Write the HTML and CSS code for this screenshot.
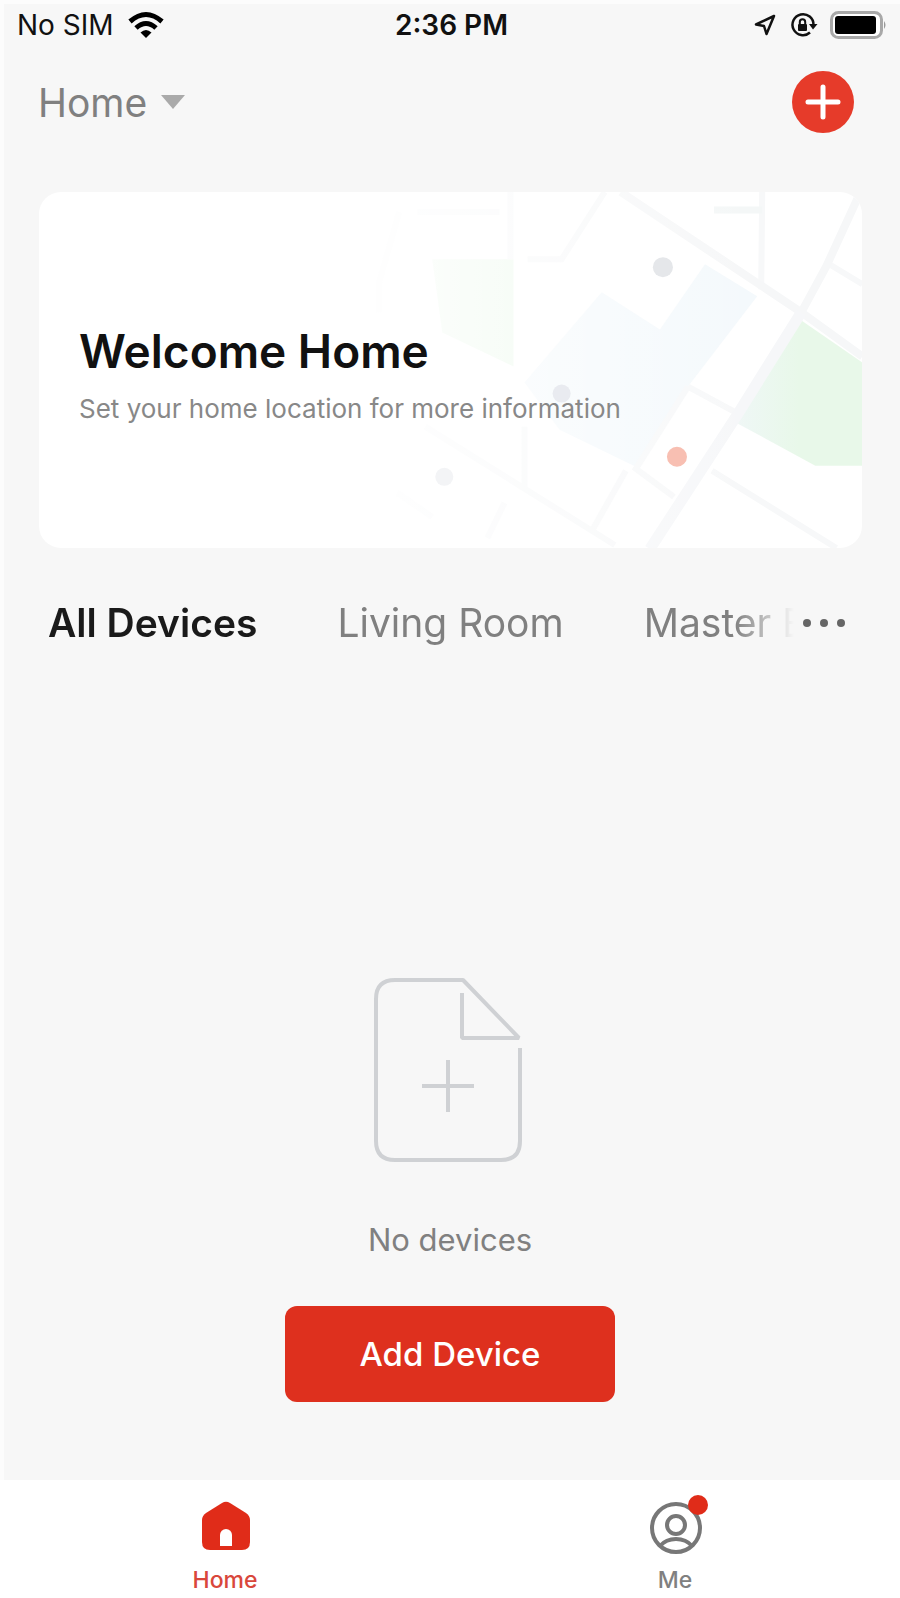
FILE: index.html
```html
<!DOCTYPE html>
<html lang="en">
<head>
    <meta charset="UTF-8">
    <meta name="viewport" content="width=device-width, initial-scale=1.0">
    <title>Home</title>

    <link rel="stylesheet" href="styles.css">
</head>
<body>
    <div class="app">
        <div class="status_bar">
            <div class="status_left">
                <span>No SIM</span>
                <svg width="36" height="26" viewBox="0 0 36 26" fill="none" stroke="#000" stroke-width="5">
                    <path d="M2 9.500Q18-4.500 34 9.500"/>
                    <path d="M8 16Q18 7 28 16"/>
                    <path d="M18 26L12.500 20.500Q18 15.500 23.500 20.500Z" fill="#000" stroke="none"/>
                </svg>
            </div>
            <span class="status_time">2:36 PM</span>
            <div class="status_right">
                <svg width="22" height="22" viewBox="0 0 22 22" fill="none" stroke="#111" stroke-width="2.500" stroke-linejoin="round">
                    <path d="M20 2L2 10.500L10 12L12.500 20Z"/>
                </svg>
                <svg width="26" height="26" viewBox="0 0 26 26" fill="none" stroke="#111" stroke-width="2.500">
                    <path d="M20 20.500A10.500 10.500 0 1 1 23.500 13"/>
                    <path d="M19 12H27.500L23 17.500Z" fill="#111" stroke="none"/>
                    <rect x="8" y="12" width="9" height="7" rx="1" fill="#111" stroke="none"/>
                    <path d="M9.800 12V10A2.700 2.700 0 0 1 15.200 10V12" stroke-width="2"/>
                </svg>
                <svg width="56" height="28" viewBox="0 0 56 28">
                    <rect x="1.500" y="1.500" width="50" height="25" rx="7" fill="#fff" stroke="#a8a8a8" stroke-width="3"/>
                    <rect x="5" y="5" width="41" height="18" rx="3"/>
                    <path d="M54 10Q57 14 54 18Z" fill="#999"/>
                </svg>
            </div>
        </div>

        <header class="header">
            <button class="home_menu" type="button">
                Home
                <svg width="24" height="14" viewBox="0 0 24 14"><path d="M0 0H24L12 14Z" fill="#aaa"/></svg>
            </button>
            <button class="add_btn" type="button" aria-label="Add">
                <svg width="34" height="34" viewBox="0 0 34 34" stroke="#fff" stroke-width="5" stroke-linecap="round"><path d="M17 2V32M2 17H32"/></svg>
            </button>
        </header>

        <section class="card">
            <svg class="map" viewBox="0 0 522 355" preserveAspectRatio="xMaxYMid slice" fill="none">
                <defs>
                    <linearGradient id="fade">
                        <stop offset="0" stop-color="#fff" stop-opacity="1"/>
                        <stop offset="0.800" stop-color="#fff" stop-opacity="0"/>
                    </linearGradient>
                    <linearGradient id="park">
                        <stop offset="0" stop-color="#eff7f6"/>
                        <stop offset="0.500" stop-color="#e8f8e9"/>
                    </linearGradient>
                </defs>
                <!-- water and parks -->
                <path d="M365 72L417 104L348 194L296 274L220 237L185 190L262 100L320 137Z" fill="#f4f9fc"/>
                <path d="M93 67H174V174L103 140Z" fill="#ecf9ec"/>
                <path d="M455 124L522 170V273H475L396 230Z" fill="url(#park)"/>
                <!-- roads -->
                <g stroke="#f7f8f9" stroke-width="6">
                    <path d="M171 0V67"/>
                    <path d="M265 0L222 67H188"/>
                    <path d="M422 0L421 97"/>
                    <path d="M78 20H160M60 20L40 90V120"/>
                    <path d="M489 72L522 92"/>
                    <path d="M348 194L396 220"/>
                    <path d="M348 194L296 276L334 304"/>
                    <path d="M286 278L251 340"/>
                    <path d="M372 278L496 355"/>
                    <path d="M86 234L275 352"/>
                    <path d="M185 234V297"/>
                    <path d="M58 300L93 324M165 310L148 345"/>
                </g>
                <path d="M281 0L461 120L522 164" stroke="#f6f7f8" stroke-width="8"/>
                <path d="M520 0L486 74L461 120" stroke="#f6f7f8" stroke-width="8"/>
                <path d="M461 120L396 224L310 356" stroke="#f6f7f9" stroke-width="11"/>
                <path d="M374 18H422" stroke="#f4f7f7" stroke-width="7"/>
                <rect width="522" height="355" fill="url(#fade)"/>
                <!-- places -->
                <circle cx="323" cy="75" r="10" fill="#e5e7ea"/>
                <circle cx="222" cy="201" r="9" fill="#e9ebf0"/>
                <circle cx="105" cy="284" r="9" fill="#f3f4f6"/>
                <circle cx="337" cy="264" r="10" fill="#f8bfb2"/>
            </svg>
            <h1 class="card_title">Welcome Home</h1>
            <p class="card_text">Set your home location for more information</p>
        </section>

        <div class="rooms">
            <div class="room_list">
                <button class="room active" type="button">All Devices</button>
                <button class="room" type="button">Living Room</button>
                <button class="room" type="button">Master Bedroom</button>
            </div>
            <button class="more_btn" type="button" aria-label="More">
                <svg width="44" height="10" viewBox="0 0 44 10" fill="#666">
                    <circle cx="5" cy="5" r="4"/><circle cx="22" cy="5" r="4"/><circle cx="39" cy="5" r="4"/>
                </svg>
            </button>
        </div>

        <main class="empty">
            <svg width="150" height="184" viewBox="0 0 150 184" fill="none" stroke="#cfd1d4" stroke-width="4">
                <path d="M145 70V163Q145 182 126 182H20Q1 182 1 163V21Q1 2 20 2H88L144 60H87V15" stroke-linejoin="bevel"/>
                <path d="M73 82V134M47 108H99"/>
            </svg>
            <p class="empty_text">No devices</p>
            <button class="button" type="button">Add Device</button>
        </main>

        <nav class="tab_bar">
            <a class="tab active" href="#home">
                <svg width="54" height="60" viewBox="0 0 54 60">
                    <path d="M24 8Q28 5.500 32 8L48 18Q52 21 52 25V47Q52 55 44 55H12Q4 55 4 47V25Q4 21 8 18Z" fill="#e02c19"/>
                    <path d="M22 51V40A6 6 0 0 1 34 40V51Z" fill="#fff"/>
                </svg>
                Home
            </a>
            <a class="tab" href="#me">
                <svg width="60" height="60" viewBox="0 0 60 60" fill="none" stroke="#777" stroke-width="4">
                    <circle cx="31" cy="33" r="24"/>
                    <circle cx="31" cy="30" r="9"/>
                    <path d="M15 51Q21 44 31 44T47 51"/>
                    <circle cx="53" cy="10" r="10" fill="#e02c19" stroke="none"/>
                </svg>
                Me
            </a>
        </nav>
    </div>
</body>
</html>
```

FILE: styles.css
```css
* {
    box-sizing: border-box;
}
body {
    margin: 0;
    font-family: Inter, "Liberation Sans", sans-serif;
    background-color: #fcfcfc;
}
button {
    border: none;
    padding: 0;
    background: none;
    font-family: inherit;
    cursor: pointer;
}
svg {
    display: block;
    flex: none;
    overflow: visible;
}
.app {
    display: flex;
    flex-direction: column;
    min-height: 100vh;
    background-color: #f7f7f7;
    box-shadow: inset 4px 4px #fcfcfc;
}
.status_bar {
    display: grid;
    grid-template-columns: 1fr auto 1fr;
    align-items: center;
    height: 50px;
    padding: 0 14px 0 17px;
    font-size: 28px;
    color: #111;
}
.status_left,
.status_right {
    display: flex;
    align-items: center;
    gap: 14px;
}
.status_right {
    justify-content: flex-end;
}
.status_time {
    font-weight: 600;
}
.header {
    display: flex;
    align-items: center;
    justify-content: space-between;
    height: 104px;
    padding: 0 46px 0 38px;
}
.home_menu {
    display: flex;
    align-items: center;
    gap: 14px;
    font-size: 39px;
    color: #808080;
}
.add_btn {
    display: flex;
    align-items: center;
    justify-content: center;
    width: 62px;
    height: 62px;
    border-radius: 50%;
    background-color: #e63b2a;
}
.card {
    position: relative;
    margin: 38px 38px 0 39px;
    padding: 131px 40px 121px;
    border-radius: 22px;
    background-color: #fff;
    overflow: hidden;
}
/* map sits behind the welcome text */
.map {
    position: absolute;
    top: 0;
    right: 0;
    height: 100%;
}
.card_title {
    position: relative;
    margin: 0;
    font-size: 46px;
    line-height: 56px;
    font-weight: 600;
    color: #111;
}
.card_text {
    position: relative;
    margin: 12px 0 0;
    font-size: 26px;
    line-height: 36px;
    color: #888;
}
.rooms {
    display: flex;
    align-items: center;
    gap: 8px;
    margin-top: 51px;
    padding: 0 54px 0 48px;
}
.room_list {
    display: flex;
    flex: 1;
    gap: 80px;
    overflow: hidden;
    -webkit-mask-image: linear-gradient(to left, transparent, #000 60px);
    mask-image: linear-gradient(to left, transparent, #000 60px);
}
.room {
    flex: none;
    font-size: 39px;
    line-height: 48px;
    color: #808080;
}
.room.active {
    font-weight: 600;
    color: #1a1a1a;
}
.empty {
    display: flex;
    flex: 1;
    flex-direction: column;
    align-items: center;
    justify-content: flex-end;
    padding-bottom: 78px;
}
.empty_text {
    margin: 58px 0 46px;
    font-size: 31px;
    line-height: 40px;
    color: #808080;
}
.button {
    width: 330px;
    height: 96px;
    border-radius: 12px;
    background-color: #de301e;
    font-size: 33px;
    font-weight: 500;
    color: #fff;
}
.tab_bar {
    display: flex;
    height: 118px;
    background-color: #fff;
}
.tab {
    display: flex;
    flex: 1;
    flex-direction: column;
    align-items: center;
    gap: 6px;
    padding-top: 15px;
    font-size: 23px;
    line-height: 38px;
    font-weight: 500;
    color: #808080;
    text-decoration: none;
}
.tab.active {
    color: #d9473b;
}
```
